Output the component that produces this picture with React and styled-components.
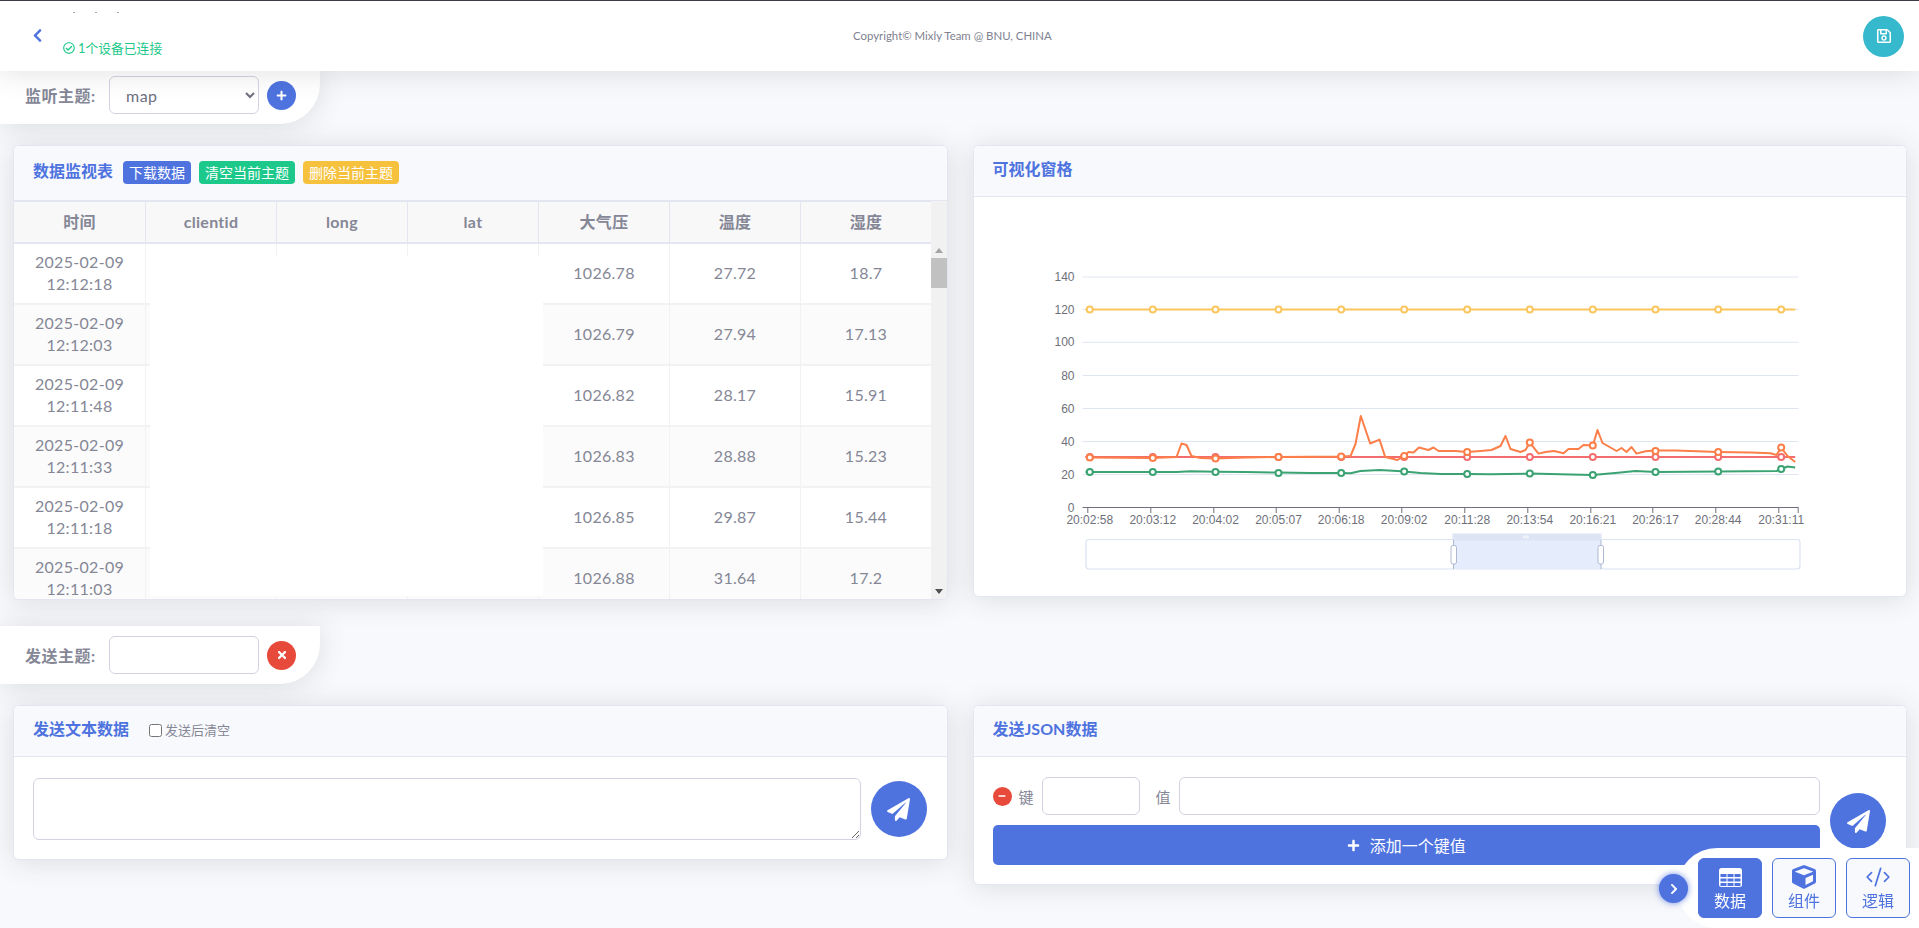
import React from 'react';
import styled, { createGlobalStyle } from 'styled-components';
import {
  FaChevronLeft,
  FaChevronRight,
  FaCube,
  FaMinus,
  FaPaperPlane,
  FaPlus,
  FaRegCheckCircle,
  FaRegSave,
  FaTimes,
} from 'react-icons/fa';
import { CodeXml } from 'lucide-react';

const primary = '#4e73df';
const muted = '#858796';
const line = '#e3e6f0';
const FONT = `Lato, "Noto Sans CJK SC", sans-serif`;

const GlobalStyle = createGlobalStyle`
  html, body {
    margin: 0;
    height: 100%;
    overflow: hidden;
    background: #f8f9fc;
    font-family: ${FONT};
    font-size: 16px;
    color: ${muted};
  }
  * {
    box-sizing: border-box;
  }
`;

const TopBar = styled.header`
  position: relative;
  z-index: 5;
  display: grid;
  grid-template-columns: 823px auto 1fr;
  align-items: center;
  height: 71px;
  padding: 0 15px 0 30px;
  background: #fff;
  border-top: 1px solid #3a3b45;
  box-shadow: 0 2px 28px rgba(58, 59, 69, 0.15);
`;

const TopLeft = styled.div`
  display: flex;
  align-items: flex-start;
  height: 100%;
`;

const BackLink = styled.a`
  display: flex;
  margin-top: 27px;
  color: ${primary};
  font-size: 15px;
`;

const DeviceBox = styled.div`
  margin-left: 18px;
`;

const Specks = styled.div`
  display: flex;
  gap: 20px;
  margin: 11px 0 0 10px;
  height: 2px;
`;

const Speck = styled.i`
  width: 2px;
  height: 1px;
  background: #aaa;
`;

const DeviceStatus = styled.div`
  display: flex;
  align-items: center;
  gap: 3px;
  margin-top: 24px;
  color: #1cc88a;
  font-size: 12.8px;
  line-height: 20px;
`;

const Copyright = styled.div`
  margin-top: -2px;
  font-size: 11.4px;
  color: #80818f;
`;

const SaveButton = styled.button`
  justify-self: end;
  display: flex;
  align-items: center;
  justify-content: center;
  width: 41px;
  height: 41px;
  padding: 0;
  border: 0;
  border-radius: 50%;
  background: #36b9cc;
  color: #fff;
  font-size: 16px;
`;

const TopicBar = styled.div`
  display: flex;
  align-items: center;
  width: 320px;
  height: ${(p) => p.$height}px;
  margin-top: ${(p) => p.$top}px;
  padding: ${(p) => (p.$under ? '0 0 5px 25px' : '0 0 0 25px')};
  background: #fff;
  border-radius: 0 0 40px 0;
  box-shadow: 0 2px 28px rgba(58, 59, 69, 0.15);
`;

const TopicLabel = styled.label`
  width: 84px;
  font-weight: 700;
  font-size: 16px;
  letter-spacing: 0.5px;
  color: ${muted};
`;

const TopicSelect = styled.select`
  width: 150px;
  height: 38px;
  padding: 0 12px;
  border: 1px solid #d1d3e2;
  border-radius: 6px;
  background: #fff;
  color: #6e707e;
  font-family: ${FONT};
  font-size: 16px;
  letter-spacing: 0.5px;
`;

const TextInput = styled.input`
  flex: ${(p) => (p.$grow ? '1' : 'none')};
  width: ${(p) => (p.$width ? `${p.$width}px` : 'auto')};
  min-width: 0;
  height: 38px;
  border: 1px solid #d1d3e2;
  border-radius: 6px;
  background: #fff;
`;

const RoundButton = styled.button`
  display: flex;
  flex: none;
  align-items: center;
  justify-content: center;
  width: ${(p) => p.$size}px;
  height: ${(p) => p.$size}px;
  margin-left: ${(p) => p.$left || 0}px;
  padding: 0;
  border: 0;
  border-radius: 50%;
  background: ${(p) => p.$color};
  color: #fff;
  font-size: ${(p) => p.$icon}px;
`;

const CardRow = styled.div`
  display: grid;
  grid-template-columns: 1fr 1fr;
  gap: 25px;
  align-items: start;
  margin-top: 21px;
  padding: 0 12px 0 13px;
`;

const Card = styled.section`
  overflow: hidden;
  height: ${(p) => p.$height}px;
  background: #fff;
  border: 1px solid ${line};
  border-radius: 5.6px;
  box-shadow: 0 2px 28px rgba(58, 59, 69, 0.15);
`;

const CardHeader = styled.div`
  display: flex;
  align-items: center;
  height: ${(p) => p.$height}px;
  padding: 0 19px 2px;
  background: #f8f9fc;
  border-bottom: 1px solid ${line};
`;

const CardTitle = styled.h6`
  margin: 0;
  padding-bottom: 4px;
  color: ${primary};
  font-size: 16px;
  font-weight: 700;
`;

const Badge = styled.a`
  display: flex;
  align-items: center;
  height: 23px;
  margin-left: ${(p) => p.$left}px;
  padding: 0 6px;
  border-radius: 4px;
  background: ${(p) => p.$color};
  color: #fff;
  font-size: 14px;
`;

const TableWrap = styled.div`
  display: flex;
  height: 398px;
`;

const TableClip = styled.div`
  position: relative;
  overflow: hidden;
  width: 917px;
`;

const DataTable = styled.table`
  width: 918px;
  table-layout: fixed;
  border-collapse: separate;
  border-spacing: 0;
  text-align: center;
  color: ${muted};
  line-height: 22px;
  letter-spacing: 0.3px;
`;

const HeadCell = styled.th`
  width: ${(p) => (p.$first ? 132 : 131)}px;
  height: 43px;
  padding: 0;
  background: #f8f8f9;
  border-top: 1px solid ${line};
  border-right: 1px solid ${line};
  border-bottom: 2px solid ${line};
  font-weight: 700;
`;

const Row = styled.tr`
  height: 61px;
  background: ${(p) => (p.$odd ? '#fbfbfb' : '#fff')};
`;

const Cell = styled.td`
  padding: 0 12px 2px;
  border-right: 1px solid #f2f2f4;
  border-bottom: 2px solid #f2f2f4;
`;

const CellMask = styled.div`
  position: absolute;
  top: 55px;
  left: 136px;
  width: 393px;
  height: 340px;
  background: #fff;
`;

const ScrollBar = styled.div`
  display: flex;
  flex-direction: column;
  align-items: center;
  width: 16px;
  padding: 47px 0 5px;
  background: #f1f1f1;
`;

const ScrollArrow = styled.i`
  width: 0;
  height: 0;
  margin-top: ${(p) => (p.$down ? 'auto' : '0')};
  border-left: 4px solid transparent;
  border-right: 4px solid transparent;
  border-bottom: ${(p) => (p.$down ? '0' : '5px solid #a3a3a3')};
  border-top: ${(p) => (p.$down ? '5px solid #505050' : '0')};
`;

const ScrollThumb = styled.i`
  width: 16px;
  height: 30px;
  margin-top: 5px;
  background: #c1c1c1;
`;

const ChartSvg = styled.svg`
  display: block;
  width: 933px;
  height: 400px;
  font-family: "Liberation Sans", sans-serif;
  font-size: 12px;
`;

const CheckLabel = styled.label`
  display: flex;
  align-items: center;
  margin-left: 20px;
  padding-bottom: 2px;
  font-size: 13px;
  color: ${muted};
`;

const CheckBox = styled.input`
  width: 13px;
  height: 13px;
  margin: 2px 3px 0 0;
`;

const CardBody = styled.div`
  display: flex;
  align-items: center;
  gap: 10px;
  padding: ${(p) => p.$top}px 20px 19px 19px;
`;

const TextBox = styled.textarea`
  flex: 1;
  height: 62px;
  border: 1px solid #d1d3e2;
  border-radius: 6px;
  background: #fff;
`;

const JsonColumn = styled.div`
  flex: 1;
  min-width: 0;
`;

const PairRow = styled.div`
  display: flex;
  align-items: center;
  margin-bottom: 10px;
`;

const PairLabel = styled.span`
  margin: 0 ${(p) => p.$right}px 0 ${(p) => p.$left}px;
  font-size: 15px;
  color: ${muted};
`;

const AddButton = styled.button`
  display: flex;
  align-items: center;
  justify-content: center;
  gap: 10px;
  width: 100%;
  height: 40px;
  border: 0;
  border-radius: 5px;
  background: ${primary};
  color: #fff;
  font-family: ${FONT};
  font-size: 16px;
`;

const Dock = styled.nav`
  position: fixed;
  right: 0;
  bottom: 0;
  z-index: 6;
  display: flex;
  justify-content: flex-end;
  gap: 10px;
  width: 242px;
  height: 80px;
  padding: 10px 9px 10px 0;
  background: #fff;
  border-radius: 40px 0 0 40px;
`;

const DockToggle = styled.button`
  position: absolute;
  top: 26px;
  left: -18px;
  display: flex;
  align-items: center;
  justify-content: center;
  width: 29px;
  height: 29px;
  padding: 0;
  border: 0;
  border-radius: 50%;
  background: ${primary};
  color: #fff;
  font-size: 12px;
  box-shadow: 0 0 6px rgba(78, 115, 223, 0.8);
`;

const DockButton = styled.button`
  display: flex;
  flex-direction: column;
  align-items: center;
  width: 64px;
  height: 60px;
  padding: 6px 0 0;
  border: 1px solid ${primary};
  border-radius: 6px;
  background: ${(p) => (p.$active ? primary : '#f8f9fc')};
  color: ${(p) => (p.$active ? '#fff' : primary)};
  font-family: ${FONT};
  font-size: 16px;
  line-height: 24px;
`;

const DockIcon = styled.span`
  display: flex;
  align-items: center;
  justify-content: center;
  height: 24px;
  font-size: 24px;
`;

const columns = ['时间', 'clientid', 'long', 'lat', '大气压', '温度', '湿度'];

const rows = [
  ['2025-02-09 12:12:18', '1026.78', '27.72', '18.7'],
  ['2025-02-09 12:12:03', '1026.79', '27.94', '17.13'],
  ['2025-02-09 12:11:48', '1026.82', '28.17', '15.91'],
  ['2025-02-09 12:11:33', '1026.83', '28.88', '15.23'],
  ['2025-02-09 12:11:18', '1026.85', '29.87', '15.44'],
  ['2025-02-09 12:11:03', '1026.88', '31.64', '17.2'],
];

const categories = ['20:02:58', '20:03:12', '20:04:02', '20:05:07', '20:06:18', '20:09:02', '20:11:28', '20:13:54', '20:16:21', '20:26:17', '20:28:44', '20:31:11'];
const catX = [1089.3, 1152.3, 1215, 1278, 1340.7, 1403.7, 1466.7, 1529.3, 1592.3, 1655, 1717.7, 1780.7];
const tickX = [1087.3, 1150.3, 1213.3, 1275.7, 1338.7, 1401.3, 1464.3, 1527.3, 1590.3, 1652.3, 1715.3, 1778.3, 1797.7];
const yTicks = [[0, 507.5], [20, 474.5], [40, 441.5], [60, 408.5], [80, 375.5], [100, 342.3], [120, 309.5], [140, 277]];

const orangeLine = '1085,457 1089,457.5 1152,458 1176,457 1181,443.5 1186,445 1191,456 1200,458 1215,458.5 1245,457.5 1278,457 1340.7,456.5 1350,456 1355,444 1360.3,416 1369.7,443.5 1379,439.6 1384.7,457 1397,460 1403.7,456 1408,452 1413,452.6 1418.5,447.5 1424,449 1428,450 1433,447.5 1438,451 1455,451 1466.7,452 1480,451 1491,450 1500,446 1505,436 1510,449 1520,452 1525,450 1529.3,442.6 1538,453.6 1545,452 1553.7,451 1563,453.3 1568,449 1578,449 1583,445 1592.3,445.6 1597,430 1602,443 1610,447.5 1616,451 1621,448 1626,452 1631,447 1636,453.6 1645,451.3 1655,450.6 1675,450.6 1717.7,452 1750,452.6 1770,453.3 1776,455 1780.7,447.6 1787,456 1794.7,462';
const greenLine = '1085,472 1152,472 1176,472 1190,471.3 1215,471.7 1245,472 1278,472.6 1310,473 1340.7,473 1350,473.3 1360,471 1379,470 1397,471 1403.7,471.6 1420,473 1440,474 1466.7,474 1490,474.3 1529.3,473.6 1570,474.6 1592.3,475 1620,472.6 1635,471 1655,472 1717.7,471.6 1776,471 1780.7,469 1787,466.5 1794.7,467.5';

const series = [
  { color: '#fbc65d', points: '1085,309.5 1794.7,309.5', marks: catX.map(() => 309.5) },
  { color: '#3ba272', points: greenLine, marks: [472, 472, 472, 473, 473, 471.6, 474, 473.6, 475, 472, 471.6, 469] },
  { color: '#f36d6f', points: '1085,457 1794.7,457', marks: catX.map(() => 457) },
  { color: '#fc7e49', points: orangeLine, marks: [457.5, 458, 458.5, 457, 456.5, 456, 452, 442.6, 445.6, 451, 452, 447.6] },
];

function SensorChart() {
  return (
    <ChartSvg viewBox="973.5 197 933 400">
      {yTicks.map(([value, y]) => (
        <g key={value}>
          {value > 0 && <line x1="1082" x2="1798" y1={y} y2={y} stroke="#e0e6f1" />}
          <text x="1074" y={y + 4} textAnchor="end" fill="#6e7079">{value}</text>
        </g>
      ))}
      <line x1="1082" x2="1798" y1="507.5" y2="507.5" stroke="#6e7079" />
      {tickX.map((x) => (
        <line key={x} x1={x} x2={x} y1="507.5" y2="513" stroke="#6e7079" />
      ))}
      {categories.map((label, i) => (
        <text key={label} x={catX[i]} y="524" textAnchor="middle" fill="#6e7079">{label}</text>
      ))}
      {series.map((s) => (
        <g key={s.color}>
          <polyline points={s.points} fill="none" stroke={s.color} strokeWidth="2" strokeLinejoin="round" />
          {s.marks.map((y, i) => (
            <circle key={catX[i]} cx={catX[i]} cy={y} r="3" fill="#fff" stroke={s.color} strokeWidth="2" />
          ))}
        </g>
      ))}
      <rect x="1085.5" y="539.5" width="714" height="29.5" rx="3" fill="none" stroke="#dbe2f2" strokeWidth="1.2" />
      <rect x="1453" y="540" width="147.5" height="29" fill="#e5edfc" />
      <rect x="1452" y="533.5" width="149" height="7" fill="#dde4f3" />
      <rect x="1523" y="535.5" width="1" height="3" fill="#fff" />
      <rect x="1525" y="535.5" width="1" height="3" fill="#fff" />
      <rect x="1527" y="535.5" width="1" height="3" fill="#fff" />
      <line x1="1453" x2="1453" y1="540" y2="569" stroke="#acb8d1" />
      <line x1="1600.5" x2="1600.5" y1="540" y2="569" stroke="#acb8d1" />
      <rect x="1450.5" y="545.5" width="5.5" height="18.5" rx="2" fill="#fff" stroke="#acb8d1" />
      <rect x="1597.5" y="545.5" width="5.5" height="18.5" rx="2" fill="#fff" stroke="#acb8d1" />
    </ChartSvg>
  );
}

// solid top band with three rows of three cells underneath
function TableIcon() {
  const cells = [];
  [6, 10.5, 15].forEach((y) => {
    [1.5, 8.5, 15.5].forEach((x) => {
      cells.push(<rect key={`${x}-${y}`} x={x} y={y} width="6" height="3" fill={primary} />);
    });
  });
  return (
    <svg width="23" height="19" viewBox="0 0 23 19">
      <rect width="23" height="19" rx="2.5" fill="#fff" />
      {cells}
    </svg>
  );
}

function App() {
  return (
    <>
      <GlobalStyle />
      <TopBar>
        <TopLeft>
          <BackLink><FaChevronLeft /></BackLink>
          <DeviceBox>
            <Specks><Speck /><Speck /><Speck /></Specks>
            <DeviceStatus><FaRegCheckCircle size={12} />1个设备已连接</DeviceStatus>
          </DeviceBox>
        </TopLeft>
        <Copyright>Copyright© Mixly Team @ BNU, CHINA</Copyright>
        <SaveButton><FaRegSave /></SaveButton>
      </TopBar>

      <TopicBar $height={53} $top={0} $under>
        <TopicLabel>监听主题:</TopicLabel>
        <TopicSelect defaultValue="map"><option>map</option></TopicSelect>
        <RoundButton $size={29} $left={8} $color={primary} $icon={11}><FaPlus /></RoundButton>
      </TopicBar>

      <CardRow>
        <Card $height={455}>
          <CardHeader $height={55}>
            <CardTitle>数据监视表</CardTitle>
            <Badge $left={10} $color={primary}>下载数据</Badge>
            <Badge $left={8} $color="#1cc88a">清空当前主题</Badge>
            <Badge $left={8} $color="#f6c23e">删除当前主题</Badge>
          </CardHeader>
          <TableWrap>
            <TableClip>
              <DataTable>
                <thead>
                  <tr>{columns.map((c, i) => <HeadCell key={c} $first={i === 0}>{c}</HeadCell>)}</tr>
                </thead>
                <tbody>
                  {rows.map((r, i) => (
                    <Row key={r[0]} $odd={i % 2 === 1 || i === 5}>
                      <Cell>{r[0]}</Cell>
                      <Cell /><Cell /><Cell />
                      <Cell>{r[1]}</Cell>
                      <Cell>{r[2]}</Cell>
                      <Cell>{r[3]}</Cell>
                    </Row>
                  ))}
                </tbody>
              </DataTable>
              <CellMask />
            </TableClip>
            <ScrollBar>
              <ScrollArrow />
              <ScrollThumb />
              <ScrollArrow $down />
            </ScrollBar>
          </TableWrap>
        </Card>
        <Card $height={452}>
          <CardHeader $height={51}><CardTitle>可视化窗格</CardTitle></CardHeader>
          <SensorChart />
        </Card>
      </CardRow>

      <TopicBar $height={58} $top={26}>
        <TopicLabel>发送主题:</TopicLabel>
        <TextInput $width={150} />
        <RoundButton $size={29} $left={8} $color="#e74a3b" $icon={12}><FaTimes /></RoundButton>
      </TopicBar>

      <CardRow>
        <Card $height={155}>
          <CardHeader $height={51}>
            <CardTitle>发送文本数据</CardTitle>
            <CheckLabel><CheckBox type="checkbox" />发送后清空</CheckLabel>
          </CardHeader>
          <CardBody $top={21}>
            <TextBox />
            <RoundButton $size={56} $color={primary} $icon={23}><FaPaperPlane /></RoundButton>
          </CardBody>
        </Card>
        <Card $height={180}>
          <CardHeader $height={51}><CardTitle>发送JSON数据</CardTitle></CardHeader>
          <CardBody $top={20}>
            <JsonColumn>
              <PairRow>
                <RoundButton $size={19} $color="#e74a3b" $icon={8}><FaMinus /></RoundButton>
                <PairLabel $left={7} $right={8}>键</PairLabel>
                <TextInput $width={98} />
                <PairLabel $left={16} $right={8}>值</PairLabel>
                <TextInput $grow />
              </PairRow>
              <AddButton><FaPlus size={13} />添加一个键值</AddButton>
            </JsonColumn>
            <RoundButton $size={56} $color={primary} $icon={23}><FaPaperPlane /></RoundButton>
          </CardBody>
        </Card>
      </CardRow>

      <Dock>
        <DockToggle><FaChevronRight /></DockToggle>
        <DockButton $active><DockIcon><TableIcon /></DockIcon>数据</DockButton>
        <DockButton><DockIcon><FaCube /></DockIcon>组件</DockButton>
        <DockButton><DockIcon><CodeXml size={26} strokeWidth={1.6} /></DockIcon>逻辑</DockButton>
      </Dock>
    </>
  );
}

export default App;
